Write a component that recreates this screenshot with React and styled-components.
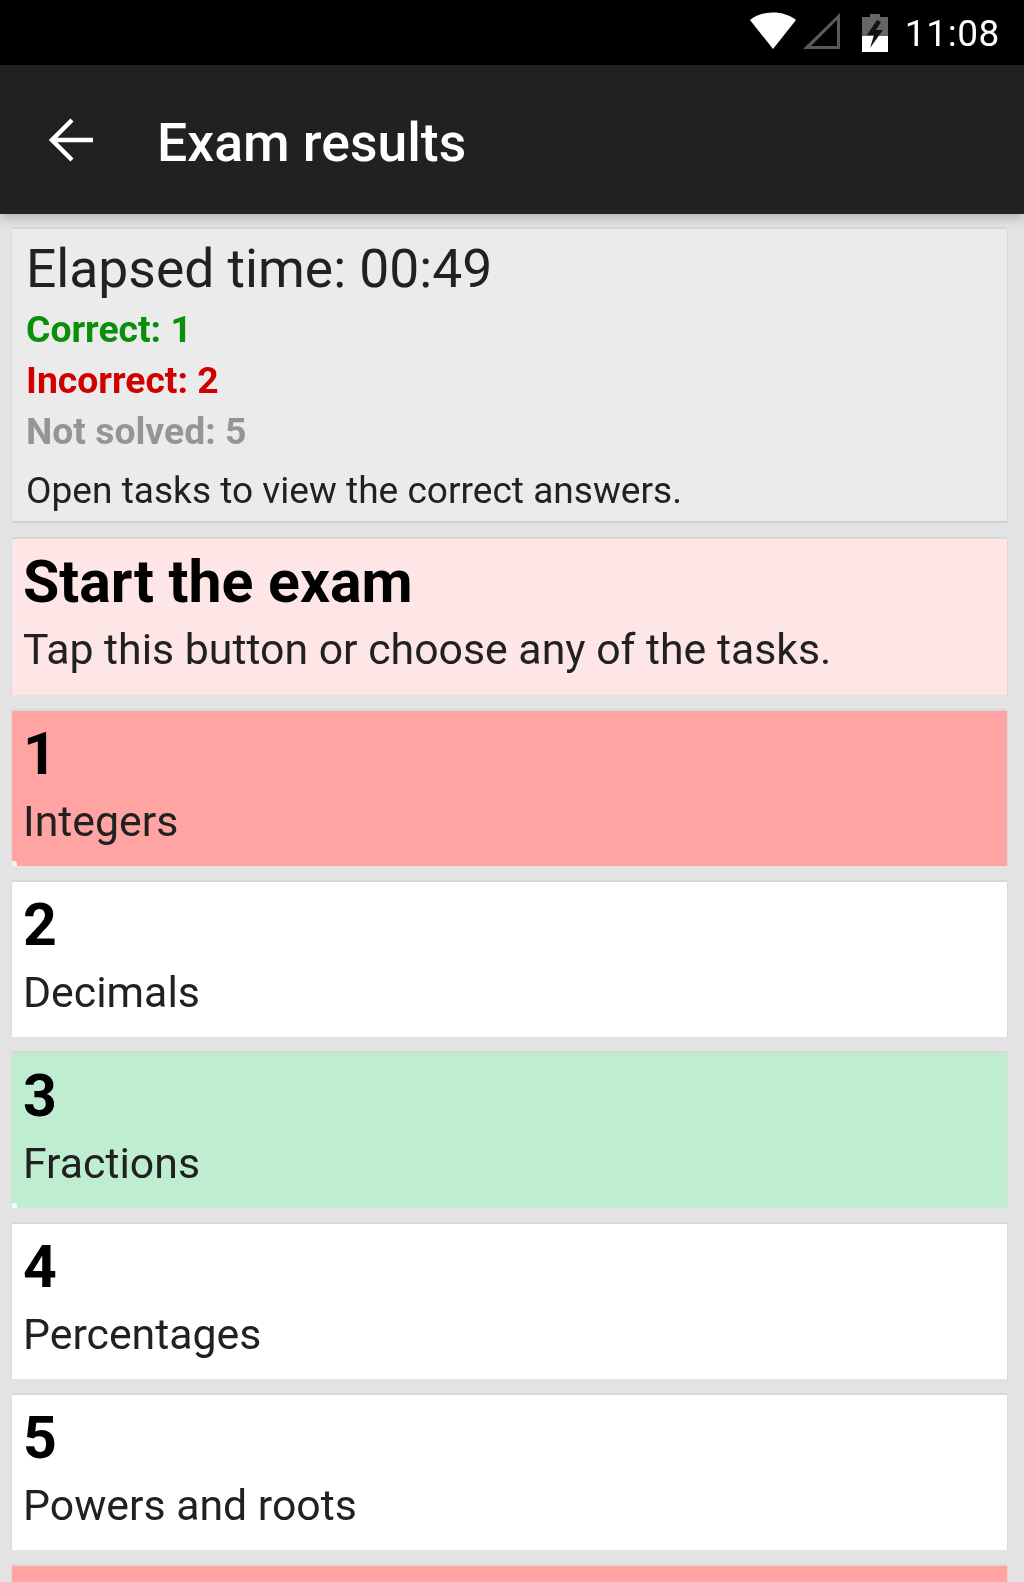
import React from "react";
import styled, { createGlobalStyle } from "styled-components";

const Global = createGlobalStyle`
  html, body { margin: 0; padding: 0; background: #e3e3e3; }
  body { font-family: Roboto, "Liberation Sans", sans-serif; }
`;

const Screen = styled.div`
  width: 1024px;
  height: 1582px;
  overflow: hidden;
  display: flex;
  flex-direction: column;
  background: #e3e3e3;
  filter: blur(0.6px);
`;

const StatusBar = styled.div`
  height: 65px;
  flex: none;
  background: #000;
  display: flex;
  align-items: center;
  justify-content: flex-end;
  padding-right: 24px;
`;

const StatusIcons = styled.svg`
  width: 110px;
  height: 42px;
  margin-right: 2px;
  display: block;
  position: relative;
  top: -1px;
`;

const BatteryIcon = styled.svg`
  width: 26px;
  height: 38px;
  margin-right: 17px;
  display: block;
`;

const Clock = styled.span`
  color: #fff;
  font-size: 37px;
  line-height: 1;
  font-weight: 400;
  letter-spacing: 0.6px;
  margin-top: 2px;
`;

const AppBar = styled.header`
  height: 149px;
  flex: none;
  background: #212121;
  display: flex;
  align-items: center;
  padding-left: 48px;
  box-shadow: 0 4px 10px rgba(0, 0, 0, 0.22);
  position: relative;
  z-index: 1;
`;

const BackIcon = styled.svg`
  width: 46px;
  height: 46px;
  display: block;
  margin-right: 63px;
`;

const Title = styled.h1`
  margin: 6px 0 0;
  color: #fff;
  font-size: 53.5px;
  font-weight: 500;
  line-height: 1;
`;

const List = styled.main`
  flex: 1;
  display: flex;
  flex-direction: column;
  padding: 15px 17px 0 12px;
  gap: 16px;
`;

const SummaryCard = styled.section`
  height: 292px;
  flex: none;
  box-sizing: border-box;
  background: #ebebeb;
  box-shadow: 0 -2px 0 0 #d8d8d8, 1px 0 0 0 #d8d8d8, -1px 0 0 0 #d8d8d8, 0 2px 0 0 #d2d2d2;
  padding: 12px 14px 0;
  margin-bottom: 2px;
`;

const Elapsed = styled.div`
  font-size: 53.4px;
  line-height: 56px;
  color: #212121;
  margin-bottom: 7px;
`;

const Stat = styled.div`
  font-size: 37.3px;
  line-height: 51px;
  font-weight: 700;
  color: ${(p) => p.$color};
`;

const Hint = styled.div`
  font-size: 37.1px;
  line-height: 44px;
  color: #212121;
  margin-top: 12px;
`;

const Tile = styled.article`
  height: ${(p) => (p.$start ? "156px" : "155px")};
  flex: none;
  box-sizing: border-box;
  background: ${(p) => p.$bg};
  box-shadow: 0 -2px 0 0 #d8d8d8, 1px 0 0 0 #d8d8d8, -1px 0 0 0 #dcdcdc;
  padding: 10px 12px 0 11px;
  display: flex;
  flex-direction: column;
  position: relative;
`;

const TaskTile = styled(Tile)`
  &::after {
    content: "";
    position: absolute;
    left: 0;
    bottom: 0;
    width: 5px;
    height: 5px;
    background: #fff;
    opacity: 0.85;
    border-top-right-radius: 3px;
  }
`;

const TileHead = styled.div`
  font-size: 59px;
  line-height: 66px;
  font-weight: 700;
  color: #000;
`;

const TileText = styled.div`
  font-size: 42.8px;
  line-height: 46px;
  margin-top: 11px;
  color: #212121;
`;

const StartHead = styled(TileHead)`
  line-height: 66px;
`;

const StartText = styled(TileText)`
  margin-top: 11px;
`;

const tasks = [
  ["1", "Integers", "#ffa3a3"],
  ["2", "Decimals", "#ffffff"],
  ["3", "Fractions", "#bfedd0"],
  ["4", "Percentages", "#ffffff"],
  ["5", "Powers and roots", "#ffffff"],
  ["", "", "#ffa3a3"],
];

export default function App() {
  return (
    <Screen>
      <Global />
      <StatusBar>
        <StatusIcons viewBox="0 0 110 42">
          <path d="M0 9 C12 -1 34 -1 46 9 L23 38 Z" fill="#fff" />
          <path d="M53 38 L90 2 V38 Z M61 35 H87 V9 Z" fill="#5a5a5a" fillRule="evenodd" />
        </StatusIcons>
        <BatteryIcon viewBox="0 0 26 38">
          <path d="M8 0 H18 V3 H26 V38 H0 V3 H8 Z" fill="#666" />
          <path d="M0 22 H26 V38 H0 Z" fill="#fff" />
          <path d="M15 6 L5 21 H12 L8 34 L21 16 H14 L19 8 Z" fill="#111" />
        </BatteryIcon>
        <Clock>11:08</Clock>
      </StatusBar>
      <AppBar>
        <BackIcon viewBox="0 0 46 46" fill="none" stroke="#fff" strokeWidth="4.5">
          <path d="M45 23 H4" />
          <path d="M24 3 L4 23 L24 43" />
        </BackIcon>
        <Title>Exam results</Title>
      </AppBar>
      <List>
        <SummaryCard>
          <Elapsed>Elapsed time: 00:49</Elapsed>
          <Stat $color="#0a8f0a">Correct: 1</Stat>
          <Stat $color="#d00000">Incorrect: 2</Stat>
          <Stat $color="#959595">Not solved: 5</Stat>
          <Hint>Open tasks to view the correct answers.</Hint>
        </SummaryCard>
        <Tile $bg="#ffe6e6" $start>
          <StartHead>Start the exam</StartHead>
          <StartText>Tap this button or choose any of the tasks.</StartText>
        </Tile>
        {tasks.map(([n, t, bg], i) => (
          <TaskTile key={i} $bg={bg}>
            <TileHead>{n}</TileHead>
            <TileText>{t}</TileText>
          </TaskTile>
        ))}
      </List>
    </Screen>
  );
}
